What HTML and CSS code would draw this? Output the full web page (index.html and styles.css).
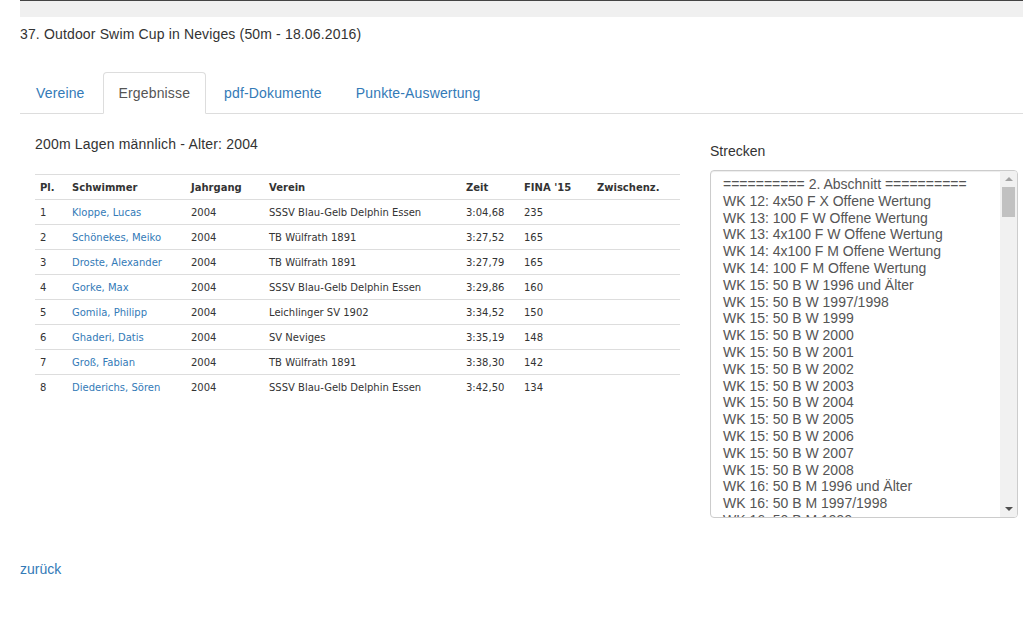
FILE: index.html
```html
<!DOCTYPE html>
<html>
    <head>
        <title>37. Outdoor Swim Cup in Neviges</title>
        <link rel="stylesheet" href="styles.css">
    </head>
    <body>
        <div class="topbar"></div>

        <div class="page">
            <p class="event">37. Outdoor Swim Cup in Neviges (50m - 18.06.2016)</p>

            <ul class="tabs">
                <li><a href="#">Vereine</a></li>
                <li class="active"><a href="#">Ergebnisse</a></li>
                <li><a href="#">pdf-Dokumente</a></li>
                <li><a href="#">Punkte-Auswertung</a></li>
            </ul>

            <div class="content">
                <div class="col-main">
                    <h4 class="race">200m Lagen männlich - Alter: 2004</h4>
                    <table class="results">
                        <colgroup>
                            <col style="width: 32px">
                            <col style="width: 119px">
                            <col style="width: 78px">
                            <col style="width: 197px">
                            <col style="width: 58px">
                            <col style="width: 73px">
                            <col>
                        </colgroup>
                        <thead>
                            <tr><th>Pl.</th><th>Schwimmer</th><th>Jahrgang</th><th>Verein</th><th>Zeit</th><th>FINA '15</th><th>Zwischenz.</th></tr>
                        </thead>
                        <tbody>
                            <tr><td>1</td><td><a href="#">Kloppe, Lucas</a></td><td>2004</td><td>SSSV Blau-Gelb Delphin Essen</td><td>3:04,68</td><td>235</td><td></td></tr>
                            <tr><td>2</td><td><a href="#">Schönekes, Meiko</a></td><td>2004</td><td>TB Wülfrath 1891</td><td>3:27,52</td><td>165</td><td></td></tr>
                            <tr><td>3</td><td><a href="#">Droste, Alexander</a></td><td>2004</td><td>TB Wülfrath 1891</td><td>3:27,79</td><td>165</td><td></td></tr>
                            <tr><td>4</td><td><a href="#">Gorke, Max</a></td><td>2004</td><td>SSSV Blau-Gelb Delphin Essen</td><td>3:29,86</td><td>160</td><td></td></tr>
                            <tr><td>5</td><td><a href="#">Gomila, Philipp</a></td><td>2004</td><td>Leichlinger SV 1902</td><td>3:34,52</td><td>150</td><td></td></tr>
                            <tr><td>6</td><td><a href="#">Ghaderi, Datis</a></td><td>2004</td><td>SV Neviges</td><td>3:35,19</td><td>148</td><td></td></tr>
                            <tr><td>7</td><td><a href="#">Groß, Fabian</a></td><td>2004</td><td>TB Wülfrath 1891</td><td>3:38,30</td><td>142</td><td></td></tr>
                            <tr><td>8</td><td><a href="#">Diederichs, Sören</a></td><td>2004</td><td>SSSV Blau-Gelb Delphin Essen</td><td>3:42,50</td><td>134</td><td></td></tr>
                        </tbody>
                    </table>
                </div>

                <div class="col-side">
                    <label class="field-label">Strecken</label>
                    <div class="listbox">
                        <div class="options">
                            <div>========== 2. Abschnitt ==========</div>
                            <div>WK 12: 4x50 F X Offene Wertung</div>
                            <div>WK 13: 100 F W Offene Wertung</div>
                            <div>WK 13: 4x100 F W Offene Wertung</div>
                            <div>WK 14: 4x100 F M Offene Wertung</div>
                            <div>WK 14: 100 F M Offene Wertung</div>
                            <div>WK 15: 50 B W 1996 und Älter</div>
                            <div>WK 15: 50 B W 1997/1998</div>
                            <div>WK 15: 50 B W 1999</div>
                            <div>WK 15: 50 B W 2000</div>
                            <div>WK 15: 50 B W 2001</div>
                            <div>WK 15: 50 B W 2002</div>
                            <div>WK 15: 50 B W 2003</div>
                            <div>WK 15: 50 B W 2004</div>
                            <div>WK 15: 50 B W 2005</div>
                            <div>WK 15: 50 B W 2006</div>
                            <div>WK 15: 50 B W 2007</div>
                            <div>WK 15: 50 B W 2008</div>
                            <div>WK 16: 50 B M 1996 und Älter</div>
                            <div>WK 16: 50 B M 1997/1998</div>
                            <div>WK 16: 50 B M 1999</div>
                        </div>
                        <div class="scrollbar">
                            <span class="arrow up"></span>
                            <span class="thumb"></span>
                            <span class="arrow down"></span>
                        </div>
                    </div>
                </div>
            </div>

            <a class="back" href="#">zurück</a>
        </div>
    </body>
</html>
```

FILE: styles.css
```css
html {
    font-family: "Liberation Sans", Arial, Helvetica, sans-serif;
}
body {
    margin: 0;
    font-size: 14px;
    line-height: 20px;
    color: #333;
    overflow: hidden;
}
a {
    color: #337ab7;
    text-decoration: none;
}
.topbar {
    margin-left: 20px;
    height: 16px;
    border-top: 1px solid #444;
    background: #f0f0f0;
}
.page {
    width: 1020px;
    padding-left: 20px;
}
.event {
    margin: 7px 0 0;
    letter-spacing: .15px;
}
.tabs {
    display: flex;
    list-style: none;
    margin: 28px 0 0;
    padding: 0;
    border-bottom: 1px solid #ddd;
    letter-spacing: .15px;
}
.tabs li {
    margin-bottom: -1px;
    margin-right: 2px;
}
.tabs a {
    display: block;
    padding: 10px 15px;
    border: 1px solid transparent;
    border-radius: 4px 4px 0 0;
}
.tabs .active a {
    color: #555;
    background: #fff;
    border-color: #ddd #ddd transparent;
}
.content {
    display: flex;
    padding-top: 20px;
}
.col-main {
    flex: none;
    width: 645px;
    padding: 0 15px;
}
.col-side {
    flex: none;
    width: 308px;
    padding: 0 15px;
}
.race {
    margin: 0 0 20px;
    font-size: 14px;
    font-weight: normal;
    letter-spacing: .18px;
}
.results {
    width: 100%;
    border-collapse: collapse;
    table-layout: fixed;
    font-family: "DejaVu Sans", Verdana, sans-serif;
    font-size: 10px;
    line-height: 14px;
}
.results th,
.results td {
    padding: 6px 5px 4px;
    text-align: left;
    border-top: 1px solid #ddd;
    white-space: nowrap;
    overflow: hidden;
}
.results th {
    font-weight: bold;
}
.field-label {
    display: block;
    margin: 7px 0 9px;
}
.listbox {
    display: flex;
    height: 346px;
    border: 1px solid #ccc;
    border-radius: 4px;
    box-shadow: inset 0 1px 1px rgba(0, 0, 0, .075);
    overflow: hidden;
}
.options {
    flex: 1;
    padding: 5px 12px;
    color: #555;
    line-height: 16.8px;
    overflow: hidden;
    white-space: nowrap;
}
.scrollbar {
    display: flex;
    flex-direction: column;
    align-items: center;
    width: 17px;
    background: #f1f1f1;
}
.arrow {
    width: 0;
    height: 0;
    border-left: 4px solid transparent;
    border-right: 4px solid transparent;
}
.arrow.up {
    margin-top: 6px;
    border-bottom: 4px solid #a3a3a3;
}
.arrow.down {
    margin-top: auto;
    margin-bottom: 6px;
    border-top: 4px solid #505050;
}
.thumb {
    width: 13px;
    height: 30px;
    margin-top: 6px;
    background: #c1c1c1;
}
.back {
    display: inline-block;
    margin-top: 41px;
}
```
